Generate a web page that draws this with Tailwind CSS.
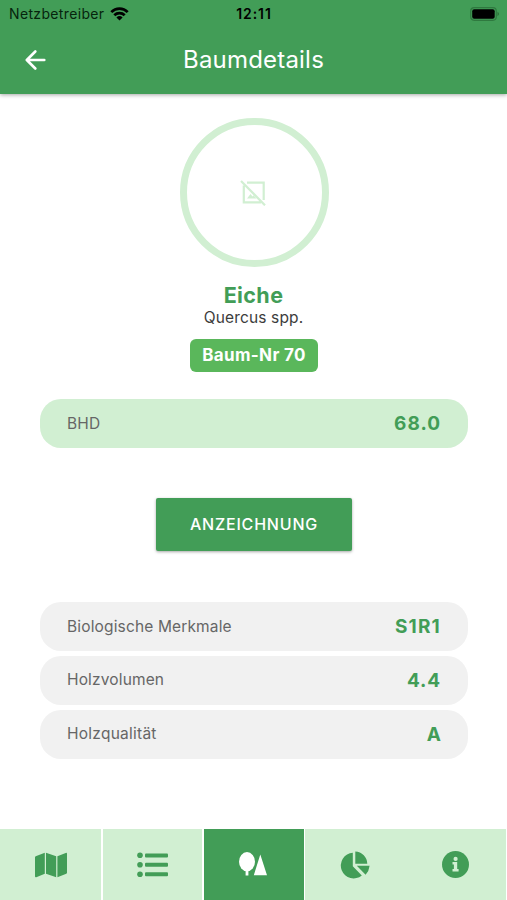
<!DOCTYPE html>
<html lang="de">
<head>
<meta charset="utf-8">
<title>Baumdetails</title>
<script src="https://cdn.jsdelivr.net/npm/@tailwindcss/browser@4"></script>
</head>
<body class="bg-white font-['Inter',sans-serif]">
<div class="flex h-[900px] w-[507px] flex-col overflow-hidden bg-white">
  <header class="relative z-10 h-[94px] shrink-0 bg-[#429d57] shadow-[0_1px_4px_rgba(0,0,0,0.35)]">
    <div class="grid h-[27px] grid-cols-3 items-center pr-[7px] pl-[9px] text-[14px] leading-[27px] text-[#06240d]">
      <div class="flex items-center gap-[6px]">
        <span class="tracking-[0.35px] whitespace-nowrap">Netzbetreiber</span>
        <svg class="h-[14px] w-[19px]" viewBox="0 0 19 14" fill="none" stroke="#000" stroke-width="2.7"><path d="M1.3 5.1C5.8.5 13.2.5 17.7 5.1M4.3 8.2C7.1 5.4 11.9 5.4 14.7 8.2"/><path d="M6.4 10.4Q9.5 7.7 12.6 10.4L9.5 13.6Z" fill="#000" stroke="none"/></svg>
      </div>
      <span class="pr-[1px] text-center font-semibold tracking-[0.9px] text-black">12:11</span>
      <svg class="h-[14px] w-[30px] justify-self-end" viewBox="0 0 30 14"><rect x=".7" y=".7" width="25.6" height="12.6" rx="3.5" fill="none" stroke="#2b7039" stroke-opacity=".8" stroke-width="1.2"/><rect x="2.2" y="2.3" width="22.5" height="9.4" rx="2" fill="#000"/><path d="M27.5 4.8Q30.5 7 27.5 9.2Z" fill="#2b7039"/></svg>
    </div>
    <div class="grid h-[66px] grid-cols-[1fr_auto_1fr] items-center px-[25px]">
      <svg class="h-[20px] w-[21px]" viewBox="0 0 21 20" fill="none" stroke="#fff" stroke-width="2.6" stroke-linecap="round" stroke-linejoin="round"><path d="M19.3 10H2M10.3 1.5L1.8 10L10.3 18.5"/></svg>
      <h1 class="text-[24px] leading-[30px] tracking-[0.2px] text-white">Baumdetails</h1>
      <span></span>
    </div>
  </header>

  <main class="flex grow flex-col items-center pt-[24px] pl-[1px]">
    <div class="flex size-[149px] items-center justify-center rounded-full border-[7px] border-[#d1efd2] pr-[2px]">
      <svg class="size-[26px]" viewBox="0 0 26 26" fill="none" stroke="#d1efd2" stroke-width="2.2"><path d="M7 2.7H23.7V20M3.8 5.5V22.3H21M1 1L25 25.3"/><path d="M7 18.5L10.5 14L12.5 16.5L13.5 15.2L16.5 18.5Z" fill="#d1efd2" stroke="none"/></svg>
    </div>
    <h2 class="mt-[15px] pr-[1px] text-[21.5px] leading-[26px] font-bold tracking-[0.4px] text-[#429d57]">Eiche</h2>
    <p class="pt-[1px] pr-[1px] text-[15.5px] leading-[17px] tracking-[0.15px] text-[#3c3c3c]">Quercus spp.</p>
    <div class="mt-[13px] flex h-[33px] w-[128px] items-center justify-center rounded-[6px] bg-[#5ab75b] pt-[1px] text-[17px] font-bold tracking-[0.35px] text-white">Baum-Nr 70</div>

    <div class="mt-[27px] flex h-[49px] w-[428px] items-center justify-between rounded-[21px] bg-[#d1efd2] px-[27px]">
      <span class="text-[15.5px] tracking-[0.2px] text-[#666]">BHD</span><span class="pt-[2px] text-[19px] font-bold tracking-[1px] text-[#429d57]">68.0</span>
    </div>

    <button class="mt-[50px] h-[53px] w-[196px] shrink-0 rounded-[2px] bg-[#429d57] pb-[2px] text-[16px] font-medium tracking-[0.8px] text-white shadow-[0_1px_3px_rgba(0,0,0,0.35)]">ANZEICHNUNG</button>

    <div class="mt-[51px] flex w-[428px] flex-col gap-[5px]">
      <div class="flex h-[49px] items-center justify-between rounded-[21px] bg-[#f1f1f1] px-[27px]">
        <span class="text-[15.5px] tracking-[0.15px] text-[#666]">Biologische Merkmale</span><span class="pt-[2px] text-[19px] font-bold tracking-[1.2px] text-[#429d57]">S1R1</span>
      </div>
      <div class="flex h-[49px] items-center justify-between rounded-[21px] bg-[#f1f1f1] px-[27px] pb-[1px]">
        <span class="text-[15.5px] tracking-[0.15px] text-[#666]">Holzvolumen</span><span class="pt-[2px] text-[19px] font-bold tracking-[0.9px] text-[#429d57]">4.4</span>
      </div>
      <div class="flex h-[49px] items-center justify-between rounded-[21px] bg-[#f1f1f1] px-[27px] pb-[1px]">
        <span class="text-[15.5px] tracking-[0.25px] text-[#666]">Holzqualität</span><span class="pt-[2px] text-[19px] font-bold text-[#429d57]">A</span>
      </div>
    </div>
  </main>

  <nav class="flex h-[71px] shrink-0 pr-[1px]">
    <div class="flex w-[101px] items-center justify-center bg-[#d1efd2]">
      <svg class="h-[26px] w-[32px]" viewBox="0 0 32 26" fill="#429d57"><path d="M0 5.3Q0 4.6.7 4.3L9.8.8V21.8L1.3 25.2Q0 25.7 0 24.3ZM11 .7L21.2 4.2V25.3L11 21.8ZM22.4 4.3L30.7.9Q32 .4 32 1.7V20.7Q32 21.4 31.3 21.7L22.4 25.2Z"/></svg>
    </div>
    <div class="ml-[2px] flex w-[99px] items-center justify-center bg-[#d1efd2]">
      <svg class="h-[26px] w-[31px]" viewBox="0 0 31 26" fill="#429d57"><circle cx="3" cy="3.3" r="2.8"/><circle cx="3" cy="12.8" r="2.8"/><circle cx="3" cy="22.3" r="2.8"/><rect x="8" y="1.4" width="23" height="4" rx="1"/><rect x="8" y="10.8" width="23" height="4" rx="1"/><rect x="8" y="20.2" width="23" height="4" rx="1"/></svg>
    </div>
    <div class="ml-[2px] flex w-[100px] items-center justify-center bg-[#429d57] pr-[2px] pb-[1px]">
      <svg class="h-[26px] w-[28px]" viewBox="0 0 28 26" fill="#fff"><ellipse cx="8" cy="10.7" rx="8" ry="9.6"/><path d="M6.6 18H9.4V24.5H6.6ZM21.3 3.5L28 24.2H14.8Z"/></svg>
    </div>
    <div class="ml-[1px] flex w-[101px] items-center justify-center bg-[#d1efd2] pr-[2px]">
      <svg class="h-[28px] w-[30px]" viewBox="0 0 30 28" fill="#429d57"><path d="M12.8 1.8V15.2L21.8 24.4A12.8 12.8 0 1 1 12.8 1.8ZM15.3.4A12.4 12.4 0 0 1 27.3 12.7H15.3ZM16.8 14.8H29.6Q29.1 20 25.6 23.8Z"/></svg>
    </div>
    <div class="flex grow items-center justify-center bg-[#d1efd2] pr-[2px]">
      <svg class="size-[27px]" viewBox="0 0 27 27"><circle cx="13.5" cy="13.5" r="13.5" fill="#429d57"/><path d="M10.5 11H15.2V18H16.6V20.4H10.5V18H11.9V13.4H10.5Z" fill="#d1efd2"/><circle cx="13.6" cy="7.9" r="2.1" fill="#d1efd2"/></svg>
    </div>
  </nav>
</div>
</body>
</html>
